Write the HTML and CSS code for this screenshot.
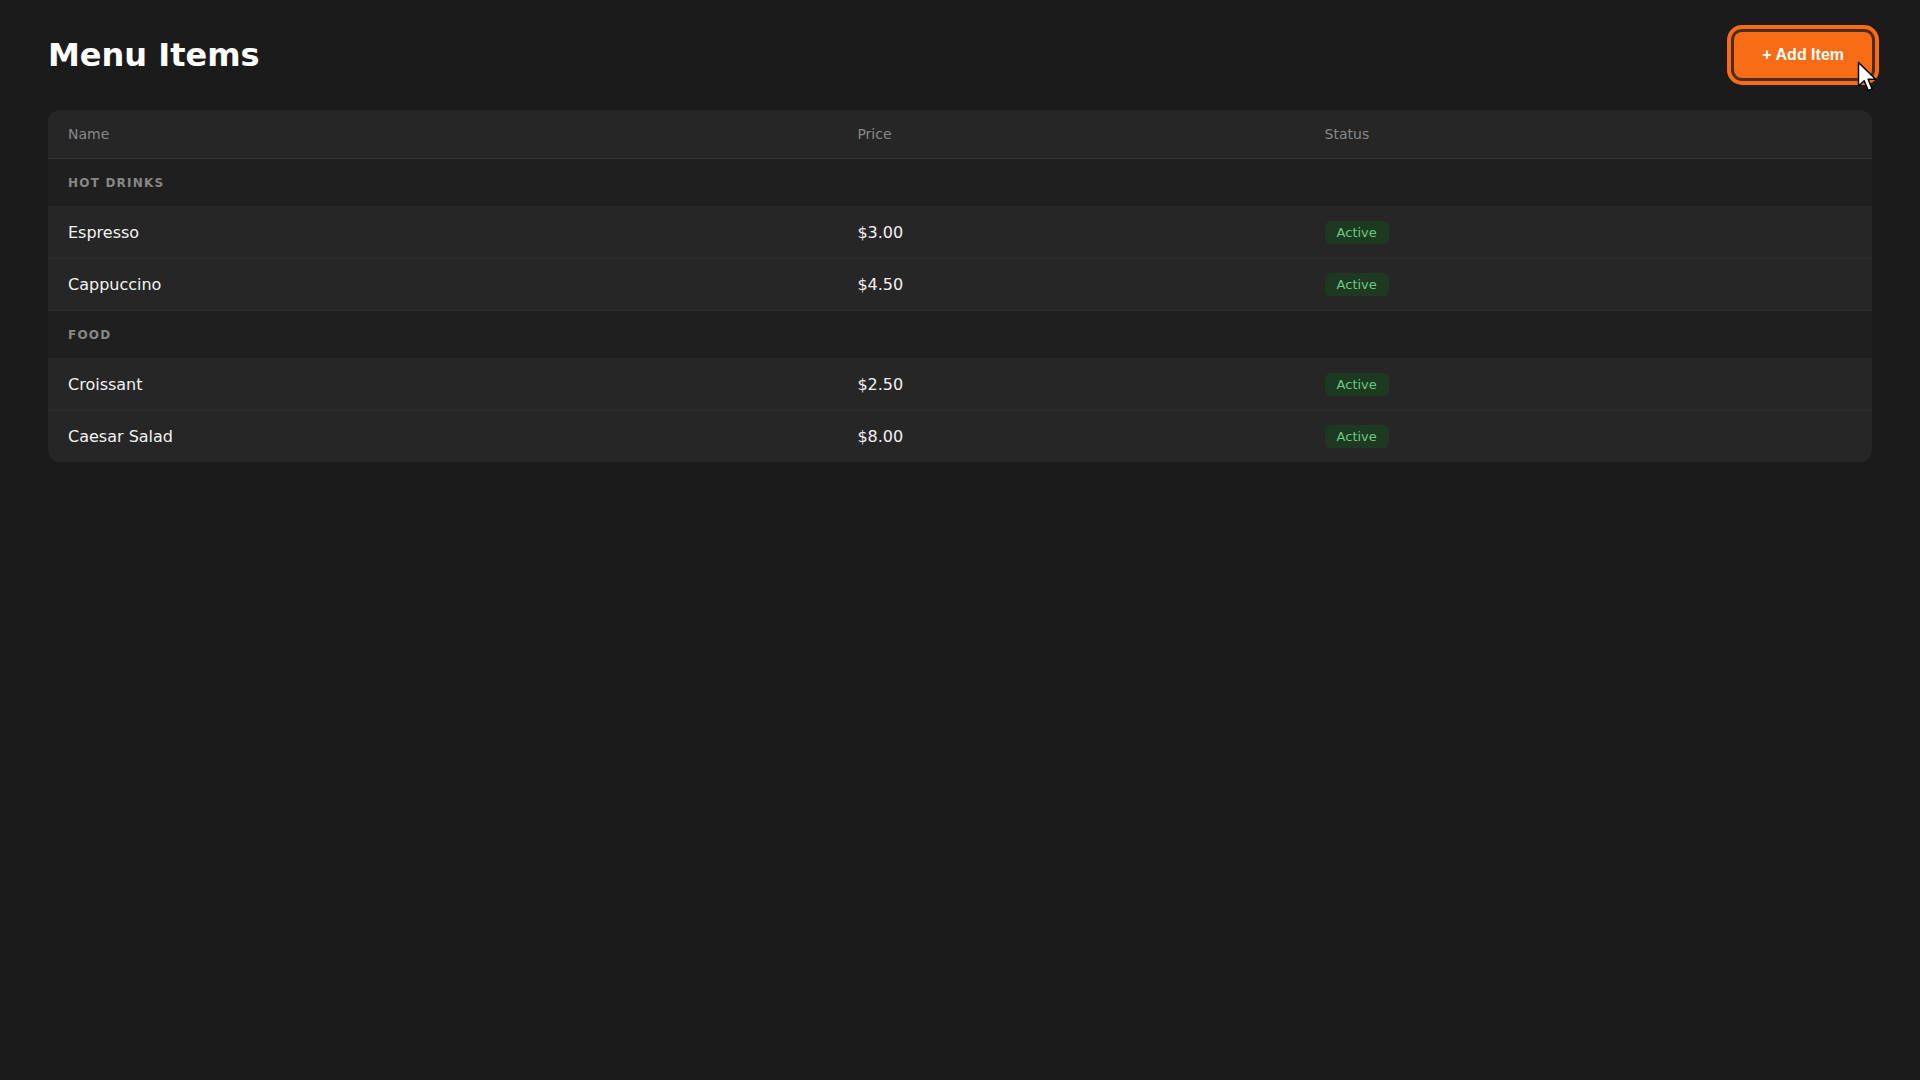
FILE: index.html
```html
<html>
  <head>
    <title>Menu Items</title>
    <link rel="stylesheet" href="styles.css">
  </head>
  <body>
    <div class="page">
      <div class="page-head">
        <h1 class="title">Menu Items</h1>
        <div class="add-wrap">
          <button class="add-btn" type="button">+ Add Item</button>
          <svg class="cursor" width="20" height="31" viewBox="0 0 13.5 21">
            <path d="M1 1 L1 17 L4.8 13.4 L7.6 20 L10.2 18.9 L7.5 12.4 L12.6 12.4 Z" fill="#fff" stroke="#000" stroke-width="1" stroke-linejoin="round"/>
          </svg>
        </div>
      </div>
      <div class="card">
        <table class="menu-table">
          <thead>
            <tr>
              <th>Name</th>
              <th>Price</th>
              <th>Status</th>
            </tr>
          </thead>
          <tbody>
            <tr class="cat-row"><td colspan="3">Hot Drinks</td></tr>
            <tr class="item-row">
              <td>Espresso</td>
              <td>$3.00</td>
              <td><span class="badge">Active</span></td>
            </tr>
            <tr class="item-row">
              <td>Cappuccino</td>
              <td>$4.50</td>
              <td><span class="badge">Active</span></td>
            </tr>
            <tr class="cat-row"><td colspan="3">Food</td></tr>
            <tr class="item-row">
              <td>Croissant</td>
              <td>$2.50</td>
              <td><span class="badge">Active</span></td>
            </tr>
            <tr class="item-row last">
              <td>Caesar Salad</td>
              <td>$8.00</td>
              <td><span class="badge">Active</span></td>
            </tr>
          </tbody>
        </table>
      </div>
    </div>
  </body>
</html>
```

FILE: styles.css
```css
html,
body {
  margin: 0;
  background-color: #1b1b1b;
  color: #f2f2f2;
  font-family: "DejaVu Sans", sans-serif;
}
.page {
  padding: 32px 48px;
}
.page-head {
  display: flex;
  align-items: center;
  justify-content: space-between;
  margin-bottom: 32px;
}
.title {
  margin: 0;
  font-size: 32px;
  font-weight: bold;
  color: #fff;
}
.add-wrap {
  position: relative;
}
.add-btn {
  display: block;
  height: 46px;
  padding: 0 28px;
  border: none;
  border-radius: 8px;
  background-color: #f76c15;
  color: #fff;
  font-family: "Liberation Sans", Arial, sans-serif;
  font-size: 16px;
  font-weight: bold;
  cursor: pointer;
  box-shadow: 0 0 0 3px #4e2c17, 0 0 0 7px #f76c15;
}
.cursor {
  position: absolute;
  left: 123px;
  top: 29px;
  pointer-events: none;
}
.card {
  border-radius: 12px;
  overflow: hidden;
  background-color: #262626;
}
.menu-table {
  width: 100%;
  border-collapse: separate;
  border-spacing: 0;
}
.menu-table th,
.menu-table td {
  box-sizing: border-box;
  padding: 0 20px;
  text-align: left;
  vertical-align: middle;
}
.menu-table th {
  height: 49px;
  font-size: 14px;
  font-weight: normal;
  color: #888;
  border-bottom: 1px solid #363636;
}
.cat-row td {
  height: 48px;
  background-color: #1f1f1f;
  color: #878787;
  font-size: 12px;
  font-weight: bold;
  text-transform: uppercase;
  letter-spacing: 1.2px;
  border-bottom: 1px solid #2a2a2a;
}
.item-row td {
  height: 52px;
  font-size: 16px;
  color: #f2f2f2;
  border-bottom: 1px solid #2c2c2c;
}
.item-row.last td {
  border-bottom: none;
  height: 51px;
}
.badge {
  display: inline-block;
  padding: 3px 12px;
  border-radius: 6px;
  background-color: #1d3a20;
  color: #6ac985;
  font-size: 13px;
  line-height: 17px;
}
```
